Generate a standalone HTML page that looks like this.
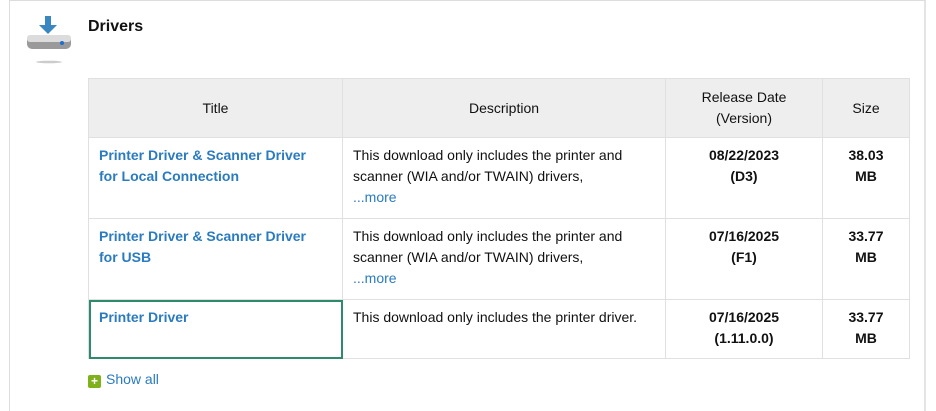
<!DOCTYPE html>
<html><head><style>
html,body{margin:0;width:936px;height:411px;overflow:hidden}
body{background:#fff;font-family:"Liberation Sans",sans-serif;font-size:14px;position:relative}
.box{position:absolute;left:9px;top:0;width:917px;height:411px;border:1px solid #ddd;border-bottom:none;border-right:2px solid #e4e4e4;box-sizing:border-box}
h2{position:absolute;left:88px;top:18px;margin:0;font-size:16px;font-weight:bold;color:#111}
table{position:absolute;left:88px;top:78px;border-collapse:collapse;table-layout:fixed}
td,th{border:1px solid #e0e0e0;vertical-align:top;line-height:21px;color:#111}
th{background:#eeeeee;font-weight:normal;height:58px;vertical-align:middle;padding:0}
td{padding:7px 10px 0 10px;box-sizing:border-box}
a{color:#2a7bc0;text-decoration:none}
td.t{padding-right:24px}
td.t a{font-weight:bold}
td.c{text-align:center;font-weight:bold}
.sel{outline:2px solid #2e8b6a;outline-offset:-2px}
.show{position:absolute;left:88px;top:371px;color:#2a7bc0;font-size:14px}
.plus{display:inline-block;width:13px;height:13px;background:#7fb11c;border-radius:2px;color:#fff;font-size:12px;line-height:13px;text-align:center;font-weight:bold;vertical-align:-1px;margin-right:5px}
</style></head><body>
<div class="box"></div>
<svg style="position:absolute;left:25px;top:14px" width="50" height="50">
<path d="M20 2h6v9h6l-9 9-9-9h6z" fill="#3a86c0"/>
<rect x="2" y="21" width="44" height="14" rx="5" fill="#9a9a9a"/>
<rect x="2" y="21" width="44" height="7" rx="3" fill="#dcdcdc"/>
<circle cx="37" cy="29" r="2" fill="#1a6fd0"/>
<ellipse cx="24" cy="48" rx="13" ry="1.3" fill="#ccc"/>
</svg>
<h2>Drivers</h2>
<table>
<colgroup><col style="width:254px"><col style="width:323px"><col style="width:157px"><col style="width:87px"></colgroup>
<tr><th>Title</th><th>Description</th><th>Release Date<br>(Version)</th><th>Size</th></tr>
<tr><td class="t" style="height:81px"><a>Printer Driver &amp; Scanner Driver for Local Connection</a></td><td>This download only includes the printer and scanner (WIA and/or TWAIN) drivers,<br><a>...more</a></td><td class="c">08/22/2023<br>(D3)</td><td class="c">38.03<br>MB</td></tr>
<tr><td class="t" style="height:81px"><a>Printer Driver &amp; Scanner Driver for USB</a></td><td>This download only includes the printer and scanner (WIA and/or TWAIN) drivers,<br><a>...more</a></td><td class="c">07/16/2025<br>(F1)</td><td class="c">33.77<br>MB</td></tr>
<tr><td class="t sel" style="height:59px"><a>Printer Driver</a></td><td>This download only includes the printer driver.</td><td class="c">07/16/2025<br>(1.11.0.0)</td><td class="c">33.77<br>MB</td></tr>
</table>
<div class="show"><span class="plus">+</span>Show all</div>
</body></html>
